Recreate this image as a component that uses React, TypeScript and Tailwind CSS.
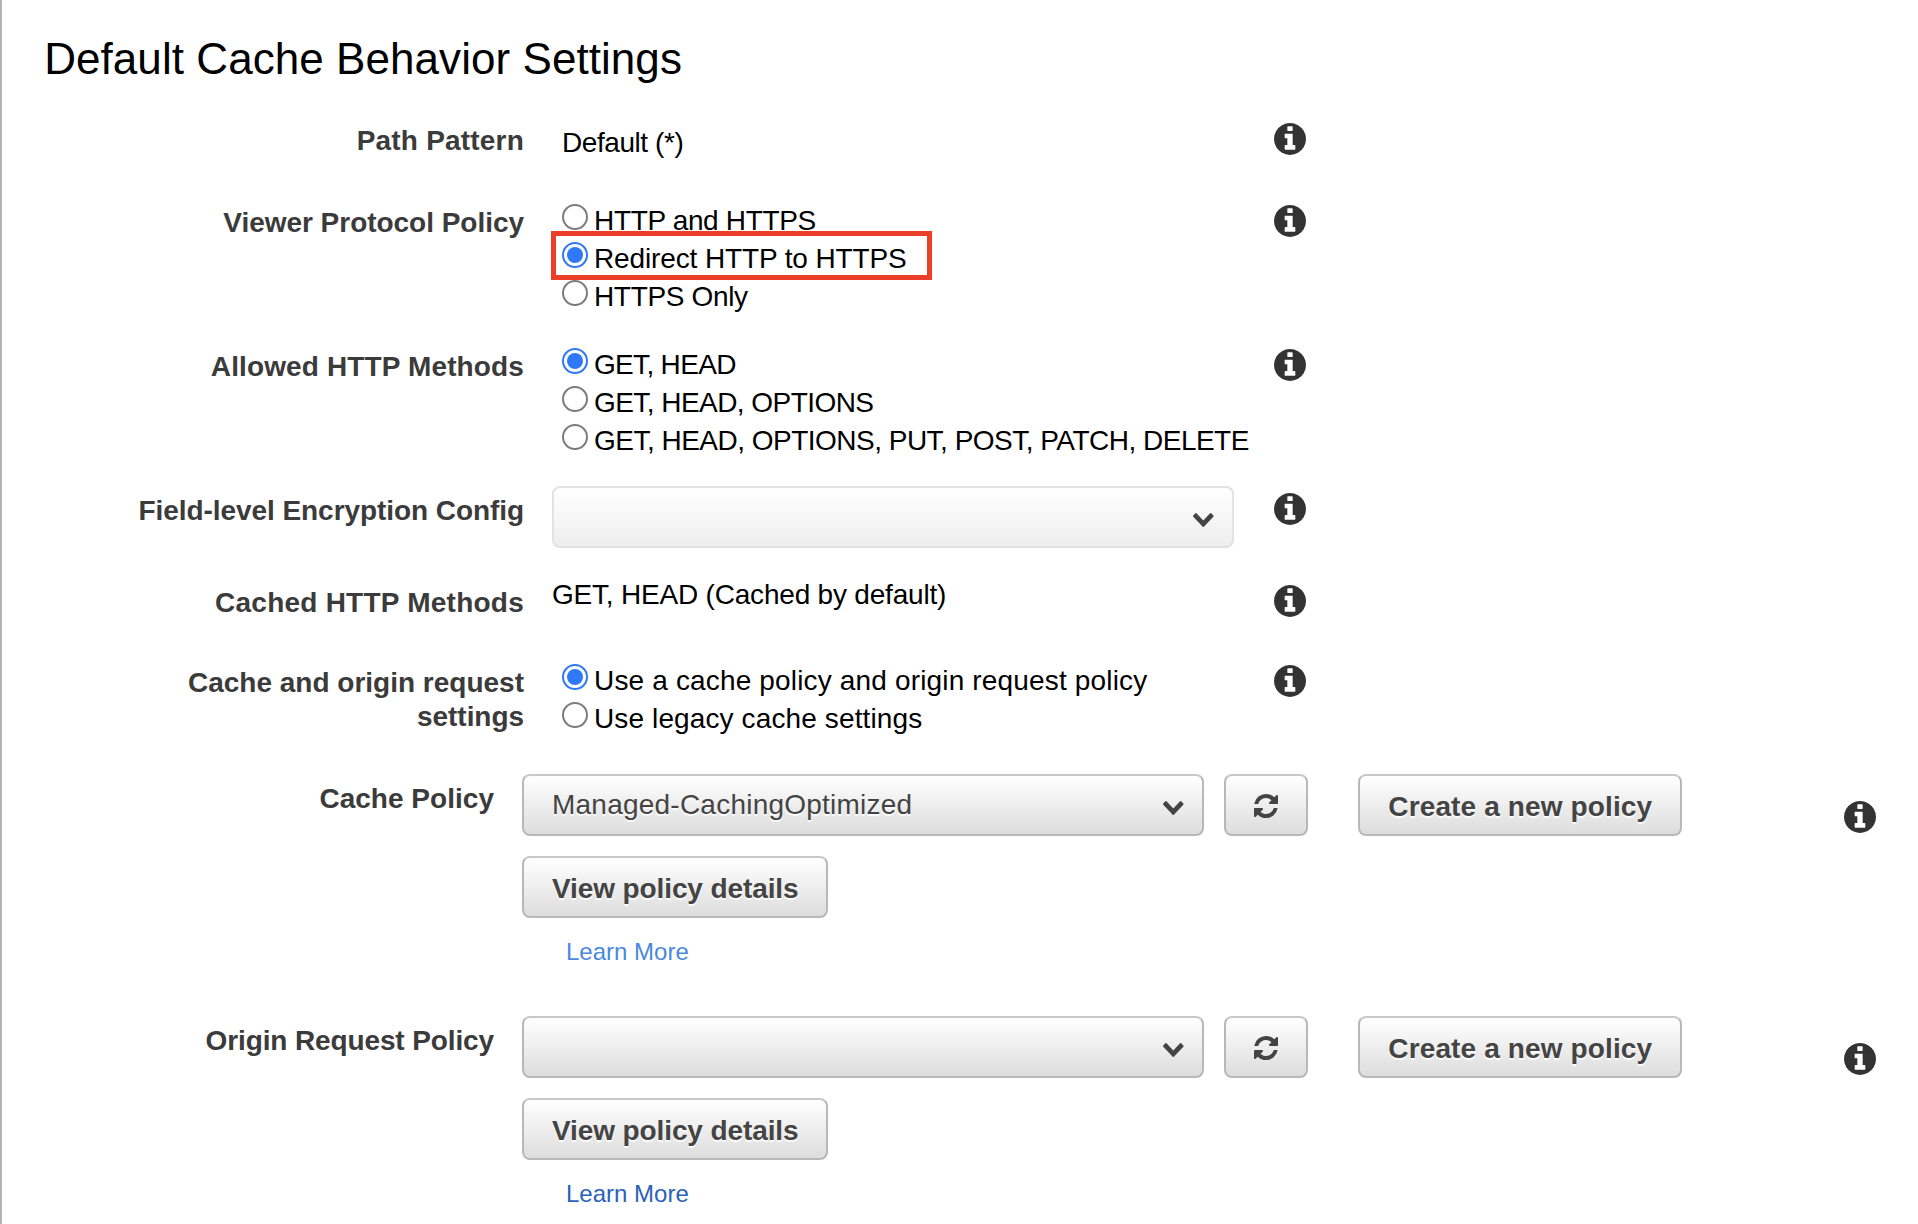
import React from "react";

function InfoIcon({ className = "" }: { className?: string }) {
  return (
    <svg viewBox="128 128 1536 1536" className={`size-8 shrink-0 fill-[#333333] ${className}`} role="img" aria-label="Info">
      <path d="M1152 1376v-160q0-14-9-23t-23-9h-96v-512q0-14-9-23t-23-9h-320q-14 0-23 9t-9 23v160q0 14 9 23t23 9h96v320h-96q-14 0-23 9t-9 23v160q0 14 9 23t23 9h448q14 0 23-9t9-23zM1024 480v-160q0-14-9-23t-23-9h-192q-14 0-23 9t-9 23v160q0 14 9 23t23 9h192q14 0 23-9t9-23zM1664 896q0 209-103 385.500t-279.500 279.500-385.500 103-385.500-103-279.500-279.500-103-385.500 103-385.500 279.500-279.500 385.500-103 385.500 103 279.500 279.500 103 385.500z" />
    </svg>
  );
}

function ChevronIcon() {
  return (
    <svg viewBox="90 533 1612 1035" preserveAspectRatio="none" className="mt-[25px] mr-[18.5px] h-3.5 w-[20.6px] shrink-0 fill-[#444444]" aria-hidden="true">
      <path d="M1683 808l-742 741q-19 19-45 19t-45-19l-742-741q-19-19-19-45.500t19-45.500l166-165q19-19 45-19t45 19l531 531 531-531q19-19 45-19t45 19l166 165q19 19 19 45.500t-19 45.500z" />
    </svg>
  );
}

function RefreshIcon() {
  return (
    <svg viewBox="128 128 1536 1536" className="mt-0.5 size-6 fill-[#444444]" aria-hidden="true">
      <path d="M1639 1056q0 5-1 7-64 268-268 434.500t-478 166.500q-146 0-282.500-55t-243.500-157l-129 129q-19 19-45 19t-45-19-19-45v-448q0-26 19-45t45-19h448q26 0 45 19t19 45-19 45l-137 137q71 66 161 102t187 36q134 0 250-65t186-179q11-17 53-117 8-23 30-23h192q13 0 22.500 9.500t9.500 22.500zM1664 256v448q0 26-19 45t-45 19h-448q-26 0-45-19t-19-45 19-45l138-138q-148-137-349-137-134 0-250 65t-186 179q-11 17-53 117-8 23-30 23h-199q-13 0-22.500-9.500t-9.500-22.500v-7q65-268 270-434.500t480-166.500q146 0 284 55.500t245 156.500l130-129q19-19 45-19t45 19 19 45z" />
    </svg>
  );
}

const buttonBase =
  "flex h-[62px] shrink-0 rounded-lg border-2 border-[#b8b8b8] border-t-[#c8c8c8] bg-linear-to-b from-white to-[#dddddd] text-[#444444] [text-shadow:0_2px_1px_rgba(255,255,255,0.9)]";

interface FieldProps {
  label: { text: string; className?: string }[];
  className: string;
  children: React.ReactNode;
}

function Field({ label, className, children }: FieldProps) {
  return (
    <div className={`flex items-start ${className}`}>
      <div className="mr-7 flex w-[522px] shrink-0 flex-col gap-px text-right leading-[33px] font-bold text-[#3b3b3b]">
        {label.map((line) => (
          <span key={line.text} className={line.className}>
            {line.text}
          </span>
        ))}
      </div>
      <div className="w-[722px] shrink-0">{children}</div>
      <InfoIcon className="mt-[-1.5px]" />
    </div>
  );
}

interface Option {
  text: string;
  className: string;
  checked?: boolean;
  highlighted?: boolean;
}

function RadioGroup({ name, options }: { name: string; options: Option[] }) {
  return (
    <div className="-mt-1 ml-2.5">
      {options.map((o) => (
        <label key={o.text} className="relative flex h-[38px] items-start">
          <input
            type="radio"
            name={name}
            defaultChecked={o.checked}
            className="mt-0.5 size-[26px] shrink-0 appearance-none rounded-full border-2 border-[#7c7c7c] bg-white bg-clip-content p-[3px] checked:border-[#2f78f8] checked:bg-[#2f78f8]"
          />
          <span className={`mt-[3px] leading-[31px] whitespace-nowrap ${o.className}`}>{o.text}</span>
          {o.highlighted && (
            <span className="absolute -top-[9px] -left-[11px] z-10 h-[49px] w-[381px] border-5 border-[#ec3f27]" />
          )}
        </label>
      ))}
    </div>
  );
}

interface PolicyProps {
  label: string;
  labelClass: string;
  value: string;
  linkClass: string;
}

function PolicyRow({ label, labelClass, value, linkClass }: PolicyProps) {
  return (
    <div className="flex h-[242px] items-start">
      <div className={`mt-2 mr-7 w-[492px] shrink-0 text-right leading-[33px] font-bold text-[#3b3b3b] ${labelClass}`}>{label}</div>
      <div className="w-[1322px] shrink-0">
        <div className="flex">
          <button type="button" className={`${buttonBase} w-[682px] items-start justify-between pl-7`}>
            <span className="mt-[13px] leading-[31px] tracking-[0.23px]">{value}</span>
            <ChevronIcon />
          </button>
          <button type="button" aria-label="Refresh" className={`${buttonBase} ml-5 w-[84px] items-center justify-center`}>
            <RefreshIcon />
          </button>
          <button type="button" className={`${buttonBase} ml-[50px] w-[324px] items-start pl-[28.3px] font-bold`}>
            <span className="mt-[15px] leading-[31px] tracking-[0.13px] whitespace-nowrap">Create a new policy</span>
          </button>
        </div>
        <button type="button" className={`${buttonBase} mt-5 w-[306px] items-start pl-7 font-bold`}>
          <span className="mt-[15px] leading-[31px] tracking-[-0.106px] whitespace-nowrap">View policy details</span>
        </button>
        <a href="#" className={`mt-5 ml-11 block w-fit text-2xl leading-[27px] ${linkClass}`}>
          Learn More
        </a>
      </div>
      <InfoIcon className="mt-[26.5px]" />
    </div>
  );
}

export default function App() {
  return (
    <main className="h-[1224px] overflow-hidden border-l-2 border-[#b3b3b3] bg-white font-['Liberation_Sans',Arial,sans-serif] text-[28px] text-black">
      <h1 className="mt-[34px] ml-[42.2px] h-[90px] text-[44px] leading-[49px] tracking-[0.06px]">Default Cache Behavior Settings</h1>

      <Field className="h-[82px]" label={[{ text: "Path Pattern", className: "tracking-[0.198px]" }]}>
        <div className="mt-[3px] ml-2.5 leading-[31px] tracking-[-0.43px]">Default (*)</div>
      </Field>

      <Field className="h-[144px]" label={[{ text: "Viewer Protocol Policy", className: "tracking-[-0.03px]" }]}>
        <RadioGroup
          name="viewer-protocol"
          options={[
            { text: "HTTP and HTTPS", className: "ml-1.5 tracking-[-0.345px]" },
            { text: "Redirect HTTP to HTTPS", className: "ml-1.5 tracking-[-0.127px]", checked: true, highlighted: true },
            { text: "HTTPS Only", className: "ml-1.5 tracking-[-0.348px]" },
          ]}
        />
      </Field>

      <Field className="h-[144px]" label={[{ text: "Allowed HTTP Methods", className: "tracking-[0.13px]" }]}>
        <RadioGroup
          name="allowed-methods"
          options={[
            { text: "GET, HEAD", className: "ml-1.5 tracking-[-0.68px]", checked: true },
            { text: "GET, HEAD, OPTIONS", className: "ml-1.5 tracking-[-0.55px]" },
            { text: "GET, HEAD, OPTIONS, PUT, POST, PATCH, DELETE", className: "ml-1.5 tracking-[-0.51px]" },
          ]}
        />
      </Field>

      <Field className="h-[92px]" label={[{ text: "Field-level Encryption Config", className: "tracking-[-0.066px]" }]}>
        <button
          type="button"
          aria-label="Field-level Encryption Config"
          className="-mt-2 flex h-[62px] w-[682px] items-start justify-end rounded-lg border-2 border-[#e2e2e2] bg-linear-to-b from-white to-[#eeeeee]"
        >
          <ChevronIcon />
        </button>
      </Field>

      <Field className="h-20" label={[{ text: "Cached HTTP Methods", className: "tracking-[0.237px]" }]}>
        <div className="-mt-[7px] leading-[31px] tracking-[-0.2px]">GET, HEAD (Cached by default)</div>
      </Field>

      <Field
        className="h-[108px]"
        label={[{ text: "Cache and origin request" }, { text: "settings", className: "tracking-[-0.05px]" }]}
      >
        <RadioGroup
          name="cache-settings"
          options={[
            { text: "Use a cache policy and origin request policy", className: "ml-1.5 tracking-[0.16px]", checked: true },
            { text: "Use legacy cache settings", className: "ml-1.5 tracking-[0.12px]" },
          ]}
        />
      </Field>

      <PolicyRow label="Cache Policy" labelClass="tracking-[0.025px]" value="Managed-CachingOptimized" linkClass="text-[#4a89dc]" />
      <PolicyRow label="Origin Request Policy" labelClass="tracking-[-0.119px]" value="" linkClass="text-[#2a62b8]" />
    </main>
  );
}
